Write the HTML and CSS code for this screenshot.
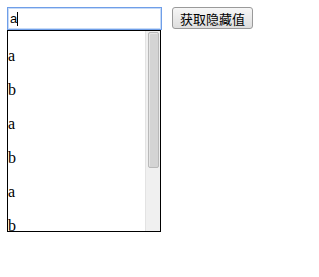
FILE: index.html
```html
<!DOCTYPE html>
<html lang="zh">
<head>
    <meta charset="UTF-8">
    <title>隐藏值</title>
    <link rel="stylesheet" href="styles.css">
</head>
<body>

<div class="row">
    <div class="combo">
        <div class="search-wrap">
            <input type="text" id="search" class="search" value="a">
            <span class="caret"></span>
        </div>
        <div class="list-wrap">
            <div class="list" id="list">
                <p>a</p>
                <p>b</p>
                <p>a</p>
                <p>b</p>
                <p>a</p>
                <p>b</p>
            </div>
            <!-- drawn scrollbar, the headless browser hides the real one -->
            <div class="scrollbar">
                <div class="thumb"></div>
            </div>
        </div>
    </div>
    <button class="get-btn">获取隐藏值</button>
</div>

</body>
</html>
```

FILE: styles.css
```css
body {
    margin: 7px;
    background-color: #fff;
}
.row {
    display: flex;
    align-items: flex-start;
}
.combo {
    width: 155px;
}
.search-wrap {
    position: relative;
}
.search {
    box-sizing: border-box;
    display: block;
    width: 155px;
    height: 23px;
    margin: 0;
    padding: 1px 2px;
    border: 1px solid #6f9ee8;
    outline: 1px solid #c6daf7;
    outline-offset: -2px;
    font-family: "Liberation Sans", Arial, sans-serif;
    font-size: 13px;
    color: #000;
}
.caret {
    position: absolute;
    left: 10px;
    top: 5px;
    width: 1px;
    height: 14px;
    background-color: #000;
}
.list-wrap {
    position: relative;
    width: 154px;
}
.list {
    box-sizing: border-box;
    width: 154px;
    height: 202px;
    border: 1px solid #000;
    overflow: hidden;
    font-family: "Liberation Serif", "Times New Roman", serif;
    font-size: 16px;
}
.list p {
    margin: 16px 0;
}
.scrollbar {
    position: absolute;
    top: 1px;
    right: 1px;
    bottom: 1px;
    width: 14px;
    background-color: #f0f0f0;
    border-left: 1px solid #e3e3e3;
}
.thumb {
    box-sizing: border-box;
    margin: 1px 1px 0 2px;
    height: 136px;
    background-color: #d4d4d4;
    border: 1px solid #b9b9b9;
    border-radius: 2px;
    box-shadow: inset 1px 1px 0 #e6e6e6;
}
.get-btn {
    margin-left: 10px;
    height: 22px;
    padding: 0 7px;
    font-family: "Noto Sans CJK SC", sans-serif;
    font-size: 13px;
    background: linear-gradient(#f6f6f6, #dedede);
    border: 1px solid #9a9a9a;
    border-radius: 3px;
    color: #000;
}
```
